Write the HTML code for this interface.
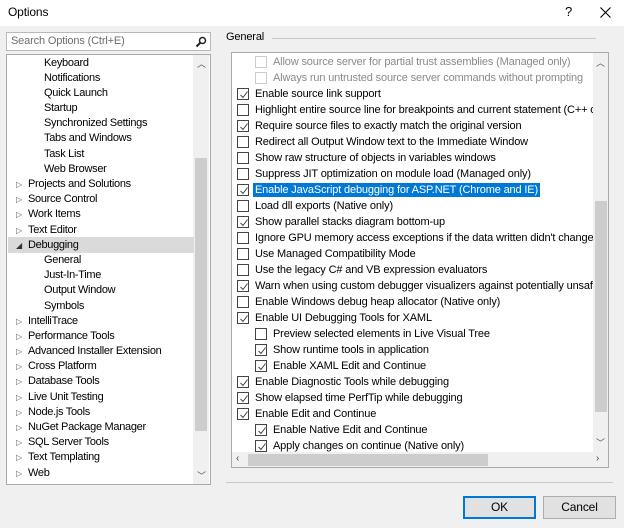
<!DOCTYPE html>
<html><head><meta charset="utf-8">
<style>
*{box-sizing:border-box;margin:0;padding:0}
body{width:624px;height:528px;background:#f0f0f0;font-family:"Liberation Sans",sans-serif;font-size:11px;letter-spacing:-0.15px;color:#000;position:relative;overflow:hidden}
.abs{position:absolute}
.title{left:0;top:0;width:624px;height:26px;background:#fff}
.search{left:6px;top:32px;width:205px;height:19px;background:#fff;border:1px solid #b9b9b9;color:#6d6d6d;padding:2px 4px}
.tree{left:6px;top:54px;width:205px;height:431px;background:#fff;border:1px solid #a9a9a9;overflow:hidden;letter-spacing:-0.3px}
.tr{position:absolute;height:15px;line-height:15px;white-space:nowrap}
.tri{position:absolute;left:10px;font-size:8px;color:#555}
.right{left:231px;top:52px;width:378px;height:416px;background:#fff;border:1px solid #a9a9a9;overflow:hidden}
.row{position:absolute;height:16px;line-height:16px;white-space:nowrap}
.cb{position:absolute;top:2px;width:12px;height:12px;border:1px solid #444;background:#fff}
.cb.dis{border-color:#ccc}
.cb svg{position:absolute;left:1px;top:1px}
.btn{height:23px;width:73px;background:#e1e1e1;border:1px solid #adadad;text-align:center;line-height:21px;font-size:12px}
</style></head><body>
<div class="abs title"></div>
<div class="abs" style="left:8px;top:5px;font-size:12px">Options</div>
<div class="abs" style="left:565px;top:4px;font-size:13px">?</div>
<svg class="abs" style="left:600px;top:7px" width="11" height="11" viewBox="0 0 11 11"><path d="M0.5 0.5L10.5 10.5M10.5 0.5L0.5 10.5" stroke="#000" stroke-width="1.1"/></svg>

<div class="abs search">Search Options (Ctrl+E)
<svg class="abs" style="right:3px;top:3px" width="12" height="12" viewBox="0 0 12 12"><circle cx="7.5" cy="4.5" r="3" fill="none" stroke="#222" stroke-width="1.5"/><path d="M5.5 6.5L1.5 10.5" stroke="#222" stroke-width="2"/></svg></div>

<div class="abs tree">
<div class="abs" style="left:186px;top:0;width:16px;height:429px;background:#f0f0f0"></div>
<div class="abs" style="left:188px;top:103px;width:12px;height:273px;background:#cdcdcd"></div>
<div class="abs" style="left:190px;top:2px;font-size:9px;color:#555">︿</div>
<div class="abs" style="left:190px;top:414px;font-size:9px;color:#555">﹀</div>
<div class="abs" style="left:1px;top:182px;width:186px;height:16px;background:#dadada"></div>
<div class="tr" style="left:37px;top:1px">Keyboard</div>
<div class="tr" style="left:37px;top:16px">Notifications</div>
<div class="tr" style="left:37px;top:31px">Quick Launch</div>
<div class="tr" style="left:37px;top:46px">Startup</div>
<div class="tr" style="left:37px;top:61px">Synchronized Settings</div>
<div class="tr" style="left:37px;top:76px">Tabs and Windows</div>
<div class="tr" style="left:37px;top:92px">Task List</div>
<div class="tr" style="left:37px;top:107px">Web Browser</div>
<div class="tr" style="left:21px;top:122px"><span class="tri" style="left:-12px">▷</span>Projects and Solutions</div>
<div class="tr" style="left:21px;top:137px"><span class="tri" style="left:-12px">▷</span>Source Control</div>
<div class="tr" style="left:21px;top:152px"><span class="tri" style="left:-12px">▷</span>Work Items</div>
<div class="tr" style="left:21px;top:168px"><span class="tri" style="left:-12px">▷</span>Text Editor</div>
<div class="tr" style="left:21px;top:183px"><span class="tri" style="left:-12px;color:#333">◢</span>Debugging</div>
<div class="tr" style="left:37px;top:198px">General</div>
<div class="tr" style="left:37px;top:213px">Just-In-Time</div>
<div class="tr" style="left:37px;top:228px">Output Window</div>
<div class="tr" style="left:37px;top:244px">Symbols</div>
<div class="tr" style="left:21px;top:259px"><span class="tri" style="left:-12px">▷</span>IntelliTrace</div>
<div class="tr" style="left:21px;top:274px"><span class="tri" style="left:-12px">▷</span>Performance Tools</div>
<div class="tr" style="left:21px;top:289px"><span class="tri" style="left:-12px">▷</span>Advanced Installer Extension</div>
<div class="tr" style="left:21px;top:304px"><span class="tri" style="left:-12px">▷</span>Cross Platform</div>
<div class="tr" style="left:21px;top:319px"><span class="tri" style="left:-12px">▷</span>Database Tools</div>
<div class="tr" style="left:21px;top:335px"><span class="tri" style="left:-12px">▷</span>Live Unit Testing</div>
<div class="tr" style="left:21px;top:350px"><span class="tri" style="left:-12px">▷</span>Node.js Tools</div>
<div class="tr" style="left:21px;top:365px"><span class="tri" style="left:-12px">▷</span>NuGet Package Manager</div>
<div class="tr" style="left:21px;top:380px"><span class="tri" style="left:-12px">▷</span>SQL Server Tools</div>
<div class="tr" style="left:21px;top:395px"><span class="tri" style="left:-12px">▷</span>Text Templating</div>
<div class="tr" style="left:21px;top:411px"><span class="tri" style="left:-12px">▷</span>Web</div>
</div>

<div class="abs" style="left:226px;top:31px">General</div>
<div class="abs" style="left:272px;top:38px;width:324px;height:1px;background:#c8c8c8"></div>

<div class="abs right" id="r">
<div class="abs" style="left:361px;top:0;width:16px;height:400px;background:#f0f0f0"></div>
<div class="abs" style="left:363px;top:148px;width:12px;height:211px;background:#cdcdcd"></div>
<div class="abs" style="left:364px;top:3px;font-size:9px;color:#555">︿</div>
<div class="abs" style="left:364px;top:383px;font-size:9px;color:#555">﹀</div>
<div class="abs" style="left:0;top:399px;width:377px;height:16px;background:#f0f0f0"></div>
<div class="abs" style="left:16px;top:401px;width:240px;height:12px;background:#cdcdcd"></div>
<div class="abs" style="left:4px;top:400px;font-size:10px;color:#444">‹</div>
<div class="abs" style="left:364px;top:400px;font-size:10px;color:#444">›</div>
</div>

<script>
var rows=[
[1,0,1,"Allow source server for partial trust assemblies (Managed only)"],
[1,0,1,"Always run untrusted source server commands without prompting"],
[0,1,0,"Enable source link support"],
[0,0,0,"Highlight entire source line for breakpoints and current statement (C++ only)"],
[0,1,0,"Require source files to exactly match the original version"],
[0,0,0,"Redirect all Output Window text to the Immediate Window"],
[0,0,0,"Show raw structure of objects in variables windows"],
[0,0,0,"Suppress JIT optimization on module load (Managed only)"],
[0,1,2,"Enable JavaScript debugging for ASP.NET (Chrome and IE)"],
[0,0,0,"Load dll exports (Native only)"],
[0,1,0,"Show parallel stacks diagram bottom-up"],
[0,0,0,"Ignore GPU memory access exceptions if the data written didn't change the value"],
[0,0,0,"Use Managed Compatibility Mode"],
[0,0,0,"Use the legacy C# and VB expression evaluators"],
[0,1,0,"Warn when using custom debugger visualizers against potentially unsafe processes"],
[0,0,0,"Enable Windows debug heap allocator (Native only)"],
[0,1,0,"Enable UI Debugging Tools for XAML"],
[1,0,0,"Preview selected elements in Live Visual Tree"],
[1,1,0,"Show runtime tools in application"],
[1,1,0,"Enable XAML Edit and Continue"],
[0,1,0,"Enable Diagnostic Tools while debugging"],
[0,1,0,"Show elapsed time PerfTip while debugging"],
[0,1,0,"Enable Edit and Continue"],
[1,1,0,"Enable Native Edit and Continue"],
[1,1,0,"Apply changes on continue (Native only)"]];
var h="";
rows.forEach(function(r,i){
var top=1+i*16, x=r[0]?23:5;
var ck=r[1]?'<svg width="10" height="10" viewBox="0 0 10 10"><path d="M1.5 5L4 7.5L8.5 1.5" fill="none" stroke="#333" stroke-width="0.9"/></svg>':'';
var txt=r[2]==2?'<span style="background:#0078d7;color:#fff;padding:1px 2px;margin-left:-2px">'+r[3]+'</span>':(r[2]==1?'<span style="color:#8a8a8a">'+r[3]+'</span>':r[3]);
h+='<div class="row" style="left:0;top:'+top+'px;width:361px;overflow:hidden"><div class="cb'+(r[2]==1?' dis':'')+'" style="left:'+x+'px">'+ck+'</div><div style="position:absolute;left:'+(x+18)+'px;top:0">'+txt+'</div></div>';
});
document.getElementById("r").insertAdjacentHTML("afterbegin",h);
</script>

<div class="abs" style="left:226px;top:482px;width:387px;height:1px;background:#c8c8c8"></div>
<div class="abs btn" style="left:463px;top:496px;border:1px solid #0078d7;box-shadow:inset 0 0 0 1px #0078d7">OK</div>
<div class="abs btn" style="left:543px;top:496px">Cancel</div>
</body></html>
